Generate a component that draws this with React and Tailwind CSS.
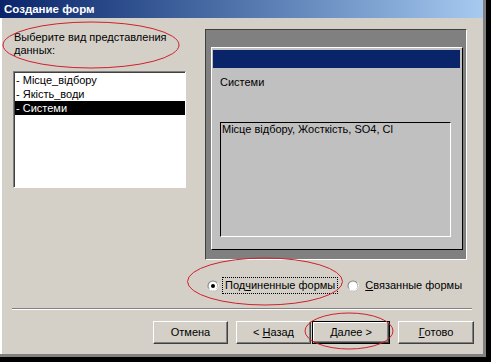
export default function App() {
  const btn =
    "flex items-center justify-center h-[23px] bg-[#d4d0c8] border border-t-white border-l-white border-b-[#404040] border-r-[#404040] shadow-[inset_-1px_-1px_0_#808080]";
  return (
    <div className="relative w-[491px] h-[362px] bg-black overflow-hidden font-['Liberation_Sans',Arial,sans-serif] text-[11px] leading-[13px] text-black">
      <div className="flex flex-col w-[486px] h-[357px] bg-[#d4d0c8] border-r-[3px] border-r-[#808080] border-b-[3px] border-b-[#808080] box-border">
        {/* title bar */}
        <div className="flex items-center h-[18px] pl-[4px] bg-gradient-to-r from-[#0a246a] to-[#a6caf0] text-white font-bold text-[11.5px]">
          Создание форм
        </div>
        {/* body */}
        <div className="flex-1 flex flex-col border-l-2 border-l-white pl-[11px] pt-[11px]">
          <div className="flex items-start">
            {/* left column */}
            <div className="flex flex-col w-[173px] mt-[2px]">
              <div className="pl-[1px]">
                Выберите вид представления
                <br />
                данных:
              </div>
              <div className="mt-[14px] w-[173px] h-[117px] bg-white border border-t-[#808080] border-l-[#808080] border-b-white border-r-white shadow-[inset_1px_1px_0_#404040] pt-[1px] pl-[1px]">
                <div className="flex items-center h-[14px] pl-[1px] leading-[14px]">- Місце_відбору</div>
                <div className="flex items-center h-[14px] pl-[1px] leading-[14px]">- Якість_води</div>
                <div className="flex items-center h-[14px] pl-[1px] leading-[14px] bg-black text-white">- Системи</div>
              </div>
            </div>
            {/* preview frame */}
            <div className="ml-[19px] w-[262px] h-[231px] bg-[#808080] border border-t-[#404040] border-l-[#404040] border-b-white border-r-white pl-[5px] pt-[17px]">
              <div className="flex flex-col w-[252px] h-[203px] bg-[#c0c0c0] border border-t-white border-l-white border-b-black border-r-black">
                <div className="mt-[2px] ml-[1px] mr-[2px] h-[18px] bg-[#0a246a]" />
                <div className="mt-[8px] pl-[8px]">Системи</div>
                <div className="mt-[33px] ml-[8px] w-[231px] h-[115px] border border-t-black border-l-black border-b-white border-r-white pl-[1px]">
                  Місце відбору, Жосткість, SO4, Cl
                </div>
              </div>
            </div>
          </div>
          {/* radio row */}
          <div className="flex items-center mt-[17px] h-[17px] ml-[194px]">
            <svg width="12" height="12" viewBox="0 0 12 12" className="shrink-0">
              <circle cx="6" cy="6" r="5.5" fill="#808080" />
              <path d="M1.2 8.5 A5.5 5.5 0 0 0 10.5 2.5" fill="none" stroke="#ffffff" strokeWidth="1" />
              <circle cx="6" cy="6" r="4.5" fill="#ffffff" />
              <circle cx="6" cy="6" r="2" fill="#000000" />
            </svg>
            <div className="ml-[3px] h-[17px] flex items-center px-[2px] border border-dotted border-black">
              Под<span className="underline">ч</span>иненные формы
            </div>
            <svg width="12" height="12" viewBox="0 0 12 12" className="shrink-0 ml-[9px]">
              <circle cx="6" cy="6" r="5.5" fill="#808080" />
              <path d="M1.2 8.5 A5.5 5.5 0 0 0 10.5 2.5" fill="none" stroke="#ffffff" strokeWidth="1" />
              <circle cx="6" cy="6" r="4.5" fill="#ffffff" />
            </svg>
            <div className="ml-[6px]">
              <span className="underline">С</span>вязанные формы
            </div>
          </div>
          {/* separator */}
          <div className="mt-[14px] ml-[-1px] w-[460px] h-[2px] border-t border-t-[#808080] border-b border-b-white" />
          {/* buttons */}
          <div className="flex mt-[11px] ml-[140px]">
            <div className={btn + " w-[75px]"}>Отмена</div>
            <div className={btn + " w-[75px] ml-[8px]"}>
              &lt; <span className="underline ml-[3px]">Н</span>азад
            </div>
            <div className="ml-[1px] w-[78px] h-[23px] border border-black flex">
              <div className={btn + " flex-1 h-full"}>
                <span className="underline">Д</span>алее &gt;
              </div>
            </div>
            <div className={btn + " w-[76px] ml-[8px]"}>
              <span className="underline">Г</span>отово
            </div>
          </div>
        </div>
      </div>
      {/* red annotation ellipses */}
      <svg className="absolute inset-0 pointer-events-none" width="491" height="362" viewBox="0 0 491 362">
        <ellipse cx="91" cy="45" rx="88" ry="23" fill="none" stroke="#d0202a" strokeWidth="1" />
        <ellipse cx="265" cy="281.5" rx="77.5" ry="23.5" fill="none" stroke="#d0202a" strokeWidth="1" />
        <ellipse cx="349" cy="331" rx="44" ry="18" fill="none" stroke="#d0202a" strokeWidth="1" />
      </svg>
    </div>
  );
}
